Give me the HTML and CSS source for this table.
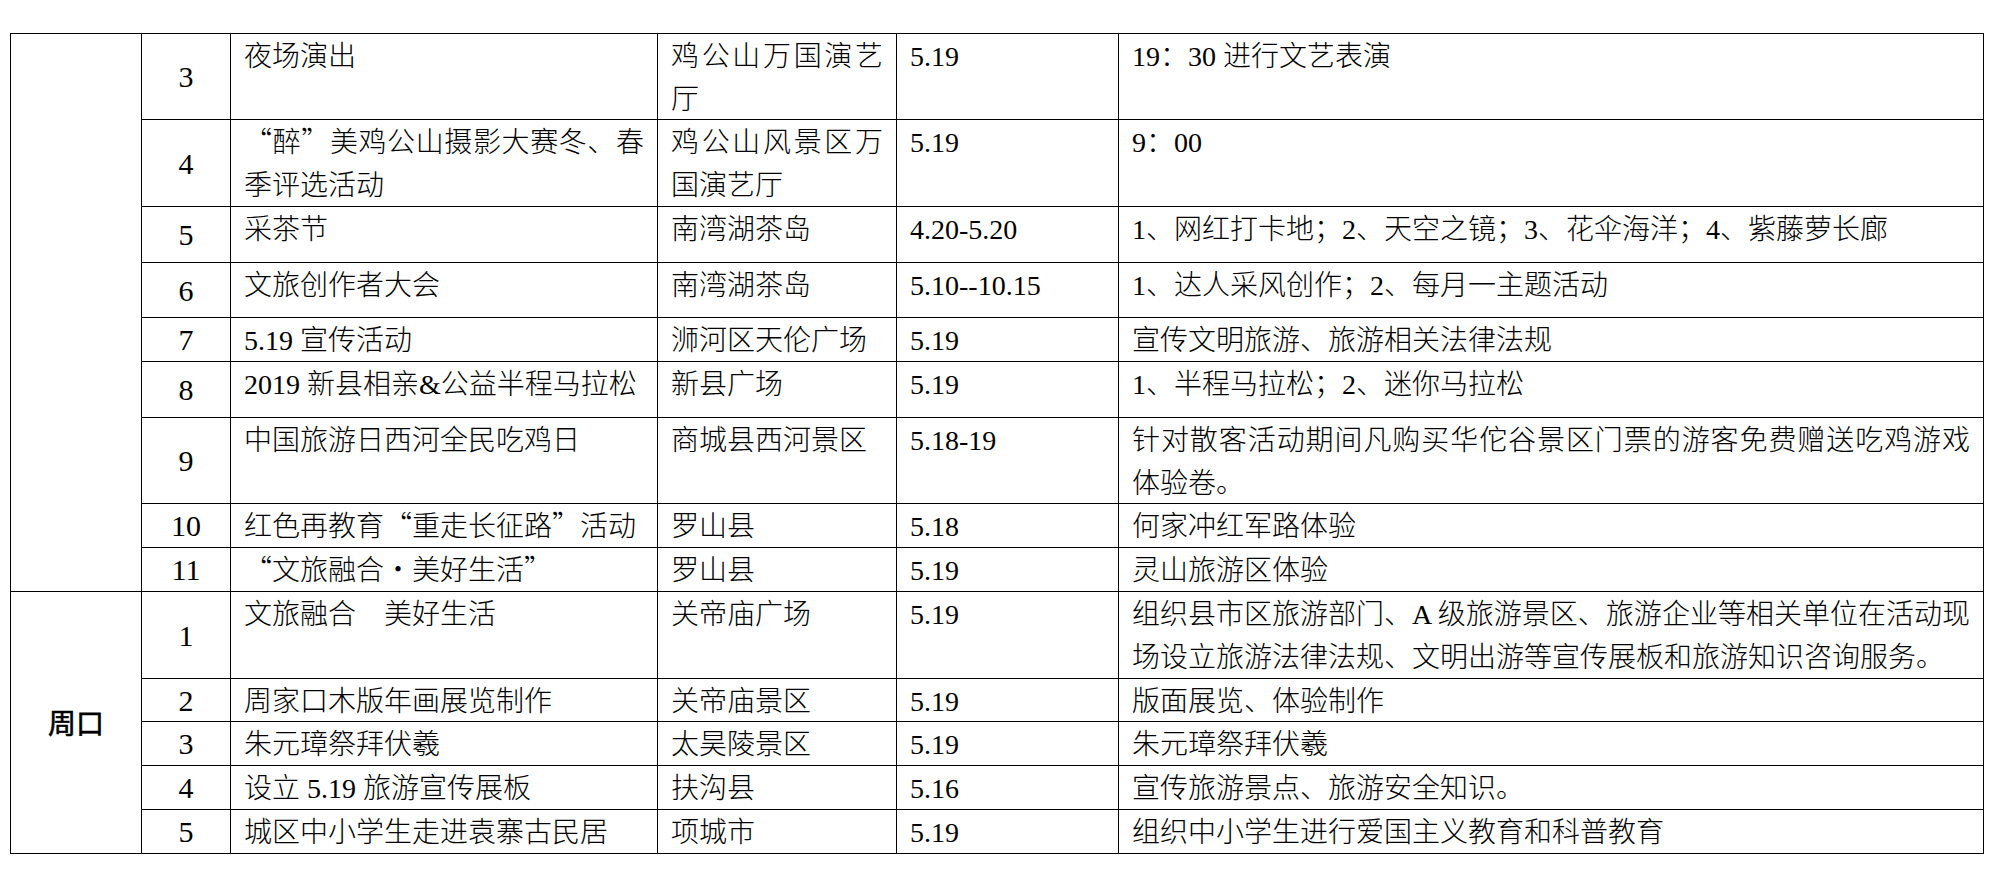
FILE: index.html
```html
<!DOCTYPE html>
<html lang="zh-CN">
<head>
<meta charset="utf-8">
<title>活动安排</title>
<link rel="stylesheet" href="styles.css">
</head>
<body>
<table class="sched">
  <colgroup>
    <col class="c-city"><col class="c-no"><col class="c-act"><col class="c-place"><col class="c-date"><col class="c-desc">
  </colgroup>
  <tbody>
    <tr class="h86">
      <td class="city" rowspan="9"></td>
      <td class="no">3</td>
      <td>夜场演出</td>
      <td><div class="jl">鸡公山万国演艺</div><div class="l2">厅</div></td>
      <td>5.19</td>
      <td>19：30 进行文艺表演</td>
    </tr>
    <tr class="h87">
      <td class="no">4</td>
      <td><div class="jl"><span class="fw">“</span>醉<span class="fw">”</span>美鸡公山摄影大赛冬、春</div><div class="l2">季评选活动</div></td>
      <td><div class="jl">鸡公山风景区万</div><div class="l2">国演艺厅</div></td>
      <td>5.19</td>
      <td>9：00</td>
    </tr>
    <tr class="h56">
      <td class="no">5</td>
      <td>采茶节</td>
      <td>南湾湖茶岛</td>
      <td>4.20-5.20</td>
      <td>1、网红打卡地；2、天空之镜；3、花伞海洋；4、紫藤萝长廊</td>
    </tr>
    <tr class="h55">
      <td class="no">6</td>
      <td>文旅创作者大会</td>
      <td>南湾湖茶岛</td>
      <td>5.10--10.15</td>
      <td>1、达人采风创作；2、每月一主题活动</td>
    </tr>
    <tr class="h44">
      <td class="no">7</td>
      <td>5.19 宣传活动</td>
      <td>浉河区天伦广场</td>
      <td>5.19</td>
      <td>宣传文明旅游、旅游相关法律法规</td>
    </tr>
    <tr class="h56">
      <td class="no">8</td>
      <td>2019 新县相亲&amp;公益半程马拉松</td>
      <td>新县广场</td>
      <td>5.19</td>
      <td>1、半程马拉松；2、迷你马拉松</td>
    </tr>
    <tr class="h86">
      <td class="no">9</td>
      <td>中国旅游日西河全民吃鸡日</td>
      <td>商城县西河景区</td>
      <td>5.18-19</td>
      <td><div class="jl">针对散客活动期间凡购买华佗谷景区门票的游客免费赠送吃鸡游戏</div><div class="l2">体验卷。</div></td>
    </tr>
    <tr class="h44">
      <td class="no">10</td>
      <td>红色再教育<span class="fw">“</span>重走长征路<span class="fw">”</span>活动</td>
      <td>罗山县</td>
      <td>5.18</td>
      <td>何家冲红军路体验</td>
    </tr>
    <tr class="h44">
      <td class="no">11</td>
      <td><span class="fw">“</span>文旅融合<span class="fw">·</span>美好生活<span class="fw">”</span></td>
      <td>罗山县</td>
      <td>5.19</td>
      <td>灵山旅游区体验</td>
    </tr>
    <tr class="h87">
      <td class="city" rowspan="5">周口</td>
      <td class="no">1</td>
      <td>文旅融合　美好生活</td>
      <td>关帝庙广场</td>
      <td>5.19</td>
      <td><div class="jl">组织县市区旅游部门、A 级旅游景区、旅游企业等相关单位在活动现</div><div class="l2">场设立旅游法律法规、文明出游等宣传展板和旅游知识咨询服务。</div></td>
    </tr>
    <tr class="h43">
      <td class="no">2</td>
      <td>周家口木版年画展览制作</td>
      <td>关帝庙景区</td>
      <td>5.19</td>
      <td>版面展览、体验制作</td>
    </tr>
    <tr class="h44">
      <td class="no">3</td>
      <td>朱元璋祭拜伏羲</td>
      <td>太昊陵景区</td>
      <td>5.19</td>
      <td>朱元璋祭拜伏羲</td>
    </tr>
    <tr class="h44">
      <td class="no">4</td>
      <td>设立 5.19 旅游宣传展板</td>
      <td>扶沟县</td>
      <td>5.16</td>
      <td>宣传旅游景点、旅游安全知识。</td>
    </tr>
    <tr class="h44">
      <td class="no">5</td>
      <td>城区中小学生走进袁寨古民居</td>
      <td>项城市</td>
      <td>5.19</td>
      <td>组织中小学生进行爱国主义教育和科普教育</td>
    </tr>
  </tbody>
</table>
</body>
</html>
```

FILE: styles.css
```css
html, body {
  margin: 0;
  padding: 0;
  background: #ffffff;
}

.sched {
  margin: 33px 0 0 10px;
  width: 1973px;
  table-layout: fixed;
  border-collapse: collapse;
  font-family: "Liberation Serif", "Noto Sans CJK SC", serif;
  font-size: 28px;
  font-weight: 300;
  color: #000000;
}

.c-city { width: 131px; }
.c-no { width: 89px; }
.c-act { width: 427px; }
.c-place { width: 239px; }
.c-date { width: 222px; }
.c-desc { width: 865px; }

.sched td {
  border: 1px solid #000000;
  padding: 3px 13px 0;
  line-height: 39px;
  vertical-align: top;
  text-align: left;
  white-space: nowrap;
}

.sched td.no {
  padding: 0;
  font-size: 30px;
  text-align: center;
  vertical-align: middle;
}

.sched td.city {
  padding: 0;
  text-align: center;
  vertical-align: middle;
  font-family: "Noto Sans CJK SC", sans-serif;
  font-weight: 400;
  -webkit-text-stroke: 0.6px #000000;
}

.jl {
  text-align: justify;
  text-align-last: justify;
}

.l2 {
  margin-top: 4px;
}

.fw {
  font-family: "Noto Sans CJK SC", sans-serif;
  font-feature-settings: "fwid" 1;
  line-height: 1;
}

.h43 { height: 43px; }
.h44 { height: 44px; }
.h55 { height: 55px; }
.h56 { height: 56px; }
.h86 { height: 86px; }
.h87 { height: 87px; }
```
